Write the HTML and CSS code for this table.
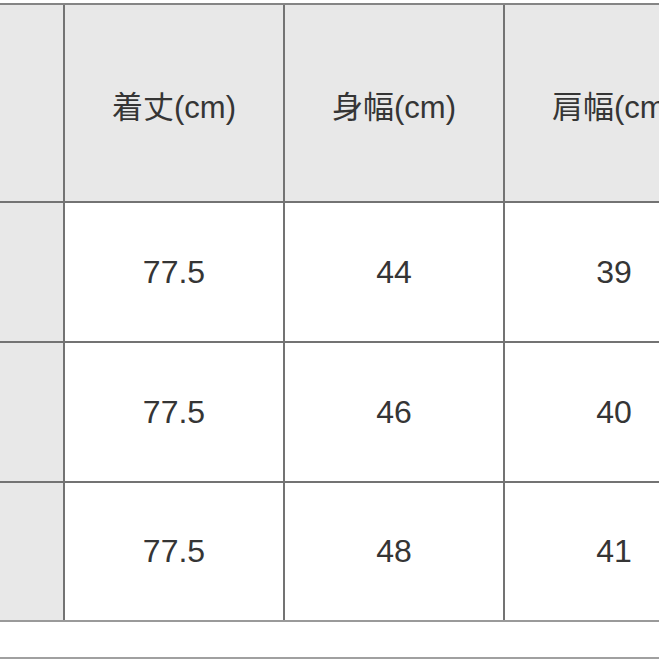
FILE: index.html
```html
<!DOCTYPE html>
<html lang="ja">
<head>
<meta charset="utf-8">
<link rel="stylesheet" href="styles.css">
</head>
<body>
<div class="page">
  <div class="sheet">
    <div class="cell head side"></div>
    <div class="cell head">着丈(cm)</div>
    <div class="cell head">身幅(cm)</div>
    <div class="cell head">肩幅(cm)</div>

    <div class="cell side"></div>
    <div class="cell num">77.5</div>
    <div class="cell num">44</div>
    <div class="cell num">39</div>

    <div class="cell side"></div>
    <div class="cell num">77.5</div>
    <div class="cell num">46</div>
    <div class="cell num">40</div>

    <div class="cell side"></div>
    <div class="cell num">77.5</div>
    <div class="cell num">48</div>
    <div class="cell num">41</div>
  </div>
  <div class="rule"></div>
</div>
</body>
</html>
```

FILE: styles.css
```css
html, body {
  margin: 0;
  padding: 0;
  background: #ffffff;
  overflow: hidden;
}
.page {
  width: 659px;
  height: 659px;
  overflow: hidden;
  background: #ffffff;
  padding-top: 3px;
  box-sizing: border-box;
}
.sheet {
  display: grid;
  grid-template-columns: 73px 218px 218px 218px;
  grid-template-rows: 196px 138px 138px 137px;
  gap: 2px;
  width: max-content;
  margin-left: -10px;
  background: #737373;
  border-top: 2px solid #858585;
  border-bottom: 2px solid #9a9a9a;
}
.cell {
  display: flex;
  align-items: center;
  justify-content: center;
  background: #ffffff;
  color: #353535;
  font-family: "Liberation Sans", "Noto Sans CJK JP", sans-serif;
}
.head {
  background: #e8e8e8;
  font-size: 31px;
  padding-top: 2px;
}
.side {
  background: #e8e8e8;
}
.num {
  font-size: 32px;
}
.rule {
  margin-top: 35px;
  height: 2px;
  background: #a0a0a0;
}
```
